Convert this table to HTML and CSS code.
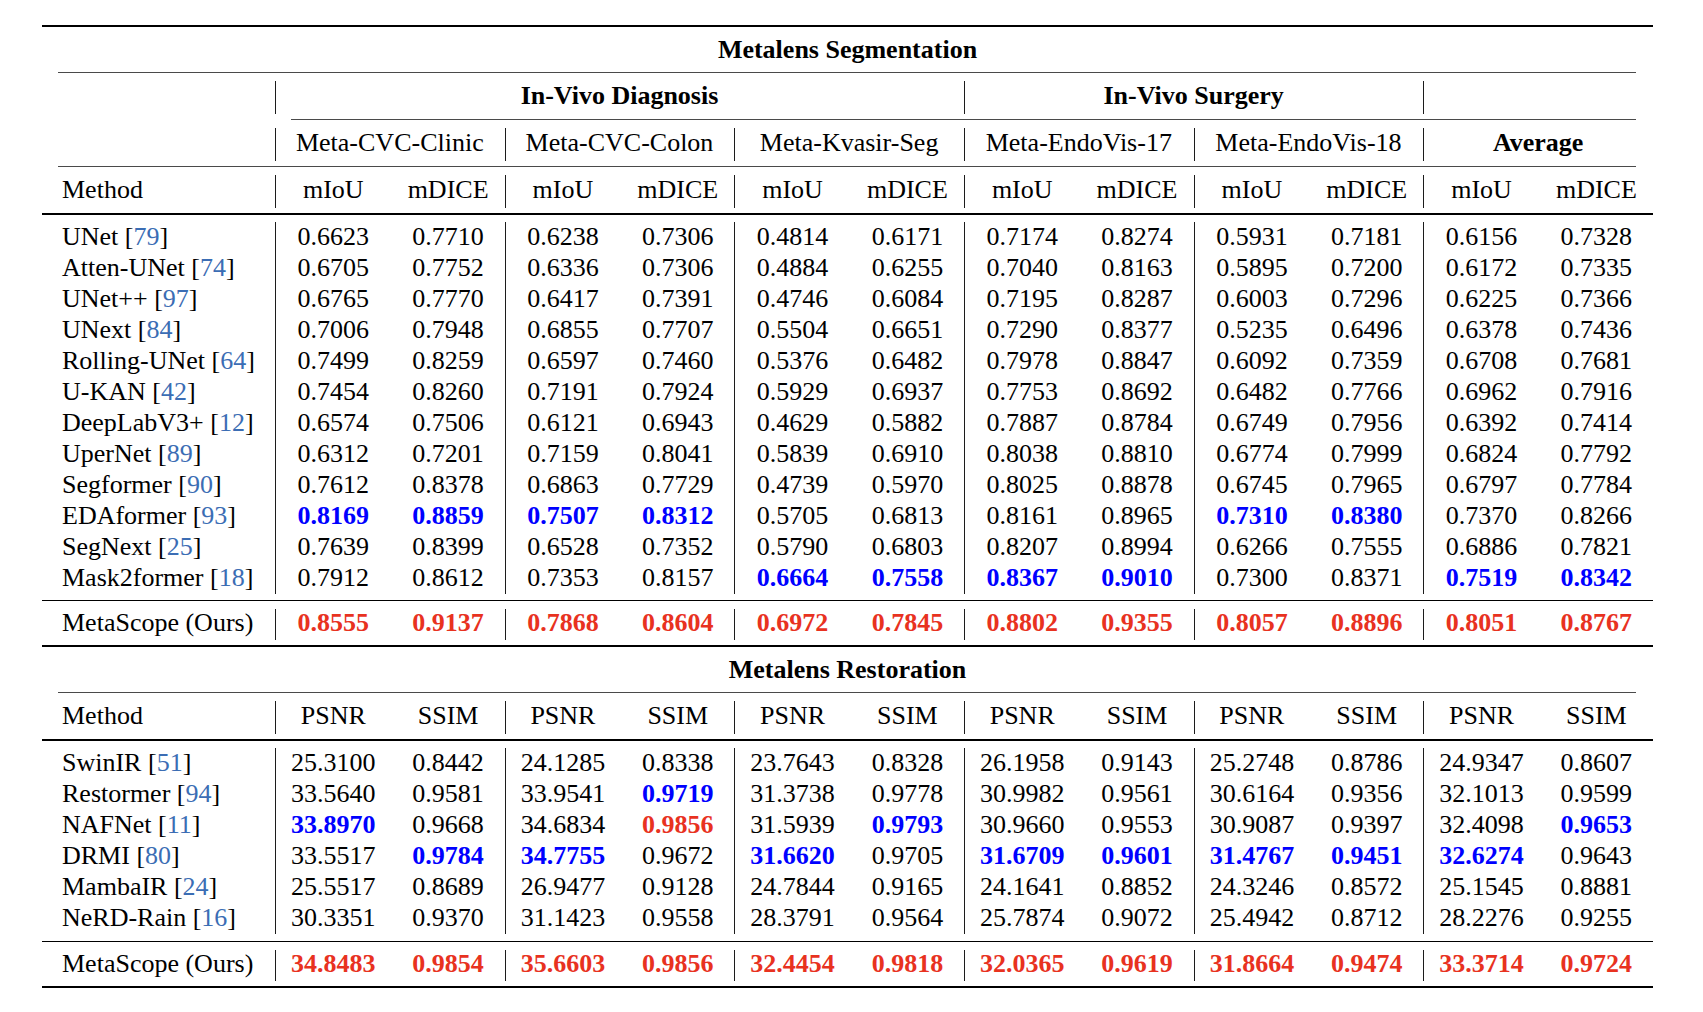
FILE: index.html
```html
<!DOCTYPE html>
<html lang="en">
<head>
<meta charset="utf-8">
<title>Metalens Segmentation and Restoration</title>
<link rel="stylesheet" href="styles.css">
</head>
<body>
<div class="tbl">
  <div class="rule-heavy"></div>
  <div class="title">Metalens Segmentation</div>
  <div class="rule-c"></div>
  <div class="row hdr bold">
    <span class="m"></span>
    <span class="sp6 bar">In-Vivo Diagnosis</span>
    <span class="sp4 bar">In-Vivo Surgery</span>
    <span class="sp2 bar"></span>
  </div>
  <div class="rule-c left-trim"></div>
  <div class="row hdr">
    <span class="m"></span>
    <span class="sp2 bar">Meta-CVC-Clinic</span>
    <span class="sp2 bar">Meta-CVC-Colon</span>
    <span class="sp2 bar">Meta-Kvasir-Seg</span>
    <span class="sp2 bar">Meta-EndoVis-17</span>
    <span class="sp2 bar">Meta-EndoVis-18</span>
    <span class="sp2 bar bold">Average</span>
  </div>
  <div class="rule-c"></div>
  <div class="row hdr pr">
    <span class="m">Method</span>
    <span>mIoU</span><span>mDICE</span>
    <span>mIoU</span><span>mDICE</span>
    <span>mIoU</span><span>mDICE</span>
    <span>mIoU</span><span>mDICE</span>
    <span>mIoU</span><span>mDICE</span>
    <span>mIoU</span><span>mDICE</span>
  </div>
  <div class="rule-light"></div>
  <div class="block">
    <div class="row d pr"><span class="m">UNet [<span class="c">79</span>]</span><span>0.6623</span><span>0.7710</span><span>0.6238</span><span>0.7306</span><span>0.4814</span><span>0.6171</span><span>0.7174</span><span>0.8274</span><span>0.5931</span><span>0.7181</span><span>0.6156</span><span>0.7328</span></div>
    <div class="row d pr"><span class="m">Atten-UNet [<span class="c">74</span>]</span><span>0.6705</span><span>0.7752</span><span>0.6336</span><span>0.7306</span><span>0.4884</span><span>0.6255</span><span>0.7040</span><span>0.8163</span><span>0.5895</span><span>0.7200</span><span>0.6172</span><span>0.7335</span></div>
    <div class="row d pr"><span class="m">UNet++ [<span class="c">97</span>]</span><span>0.6765</span><span>0.7770</span><span>0.6417</span><span>0.7391</span><span>0.4746</span><span>0.6084</span><span>0.7195</span><span>0.8287</span><span>0.6003</span><span>0.7296</span><span>0.6225</span><span>0.7366</span></div>
    <div class="row d pr"><span class="m">UNext [<span class="c">84</span>]</span><span>0.7006</span><span>0.7948</span><span>0.6855</span><span>0.7707</span><span>0.5504</span><span>0.6651</span><span>0.7290</span><span>0.8377</span><span>0.5235</span><span>0.6496</span><span>0.6378</span><span>0.7436</span></div>
    <div class="row d pr"><span class="m">Rolling-UNet [<span class="c">64</span>]</span><span>0.7499</span><span>0.8259</span><span>0.6597</span><span>0.7460</span><span>0.5376</span><span>0.6482</span><span>0.7978</span><span>0.8847</span><span>0.6092</span><span>0.7359</span><span>0.6708</span><span>0.7681</span></div>
    <div class="row d pr"><span class="m">U-KAN [<span class="c">42</span>]</span><span>0.7454</span><span>0.8260</span><span>0.7191</span><span>0.7924</span><span>0.5929</span><span>0.6937</span><span>0.7753</span><span>0.8692</span><span>0.6482</span><span>0.7766</span><span>0.6962</span><span>0.7916</span></div>
    <div class="row d pr"><span class="m">DeepLabV3+ [<span class="c">12</span>]</span><span>0.6574</span><span>0.7506</span><span>0.6121</span><span>0.6943</span><span>0.4629</span><span>0.5882</span><span>0.7887</span><span>0.8784</span><span>0.6749</span><span>0.7956</span><span>0.6392</span><span>0.7414</span></div>
    <div class="row d pr"><span class="m">UperNet [<span class="c">89</span>]</span><span>0.6312</span><span>0.7201</span><span>0.7159</span><span>0.8041</span><span>0.5839</span><span>0.6910</span><span>0.8038</span><span>0.8810</span><span>0.6774</span><span>0.7999</span><span>0.6824</span><span>0.7792</span></div>
    <div class="row d pr"><span class="m">Segformer [<span class="c">90</span>]</span><span>0.7612</span><span>0.8378</span><span>0.6863</span><span>0.7729</span><span>0.4739</span><span>0.5970</span><span>0.8025</span><span>0.8878</span><span>0.6745</span><span>0.7965</span><span>0.6797</span><span>0.7784</span></div>
    <div class="row d pr"><span class="m">EDAformer [<span class="c">93</span>]</span><span class="bb">0.8169</span><span class="bb">0.8859</span><span class="bb">0.7507</span><span class="bb">0.8312</span><span>0.5705</span><span>0.6813</span><span>0.8161</span><span>0.8965</span><span class="bb">0.7310</span><span class="bb">0.8380</span><span>0.7370</span><span>0.8266</span></div>
    <div class="row d pr"><span class="m">SegNext [<span class="c">25</span>]</span><span>0.7639</span><span>0.8399</span><span>0.6528</span><span>0.7352</span><span>0.5790</span><span>0.6803</span><span>0.8207</span><span>0.8994</span><span>0.6266</span><span>0.7555</span><span>0.6886</span><span>0.7821</span></div>
    <div class="row d pr"><span class="m">Mask2former [<span class="c">18</span>]</span><span>0.7912</span><span>0.8612</span><span>0.7353</span><span>0.8157</span><span class="bb">0.6664</span><span class="bb">0.7558</span><span class="bb">0.8367</span><span class="bb">0.9010</span><span>0.7300</span><span>0.8371</span><span class="bb">0.7519</span><span class="bb">0.8342</span></div>
  </div>
  <div class="rule-light"></div>
  <div class="row ours pr"><span class="m">MetaScope (Ours)</span><span class="rb">0.8555</span><span class="rb">0.9137</span><span class="rb">0.7868</span><span class="rb">0.8604</span><span class="rb">0.6972</span><span class="rb">0.7845</span><span class="rb">0.8802</span><span class="rb">0.9355</span><span class="rb">0.8057</span><span class="rb">0.8896</span><span class="rb">0.8051</span><span class="rb">0.8767</span></div>
  <div class="rule-heavy"></div>

  <div class="title">Metalens Restoration</div>
  <div class="rule-c"></div>
  <div class="row hdr pr">
    <span class="m">Method</span>
    <span>PSNR</span><span>SSIM</span>
    <span>PSNR</span><span>SSIM</span>
    <span>PSNR</span><span>SSIM</span>
    <span>PSNR</span><span>SSIM</span>
    <span>PSNR</span><span>SSIM</span>
    <span>PSNR</span><span>SSIM</span>
  </div>
  <div class="rule-light"></div>
  <div class="block block-b">
    <div class="row d pr"><span class="m">SwinIR [<span class="c">51</span>]</span><span>25.3100</span><span>0.8442</span><span>24.1285</span><span>0.8338</span><span>23.7643</span><span>0.8328</span><span>26.1958</span><span>0.9143</span><span>25.2748</span><span>0.8786</span><span>24.9347</span><span>0.8607</span></div>
    <div class="row d pr"><span class="m">Restormer [<span class="c">94</span>]</span><span>33.5640</span><span>0.9581</span><span>33.9541</span><span class="bb">0.9719</span><span>31.3738</span><span>0.9778</span><span>30.9982</span><span>0.9561</span><span>30.6164</span><span>0.9356</span><span>32.1013</span><span>0.9599</span></div>
    <div class="row d pr"><span class="m">NAFNet [<span class="c">11</span>]</span><span class="bb">33.8970</span><span>0.9668</span><span>34.6834</span><span class="rb">0.9856</span><span>31.5939</span><span class="bb">0.9793</span><span>30.9660</span><span>0.9553</span><span>30.9087</span><span>0.9397</span><span>32.4098</span><span class="bb">0.9653</span></div>
    <div class="row d pr"><span class="m">DRMI [<span class="c">80</span>]</span><span>33.5517</span><span class="bb">0.9784</span><span class="bb">34.7755</span><span>0.9672</span><span class="bb">31.6620</span><span>0.9705</span><span class="bb">31.6709</span><span class="bb">0.9601</span><span class="bb">31.4767</span><span class="bb">0.9451</span><span class="bb">32.6274</span><span>0.9643</span></div>
    <div class="row d pr"><span class="m">MambaIR [<span class="c">24</span>]</span><span>25.5517</span><span>0.8689</span><span>26.9477</span><span>0.9128</span><span>24.7844</span><span>0.9165</span><span>24.1641</span><span>0.8852</span><span>24.3246</span><span>0.8572</span><span>25.1545</span><span>0.8881</span></div>
    <div class="row d pr"><span class="m">NeRD-Rain [<span class="c">16</span>]</span><span>30.3351</span><span>0.9370</span><span>31.1423</span><span>0.9558</span><span>28.3791</span><span>0.9564</span><span>25.7874</span><span>0.9072</span><span>25.4942</span><span>0.8712</span><span>28.2276</span><span>0.9255</span></div>
  </div>
  <div class="rule-light"></div>
  <div class="row ours pr"><span class="m">MetaScope (Ours)</span><span class="rb">34.8483</span><span class="rb">0.9854</span><span class="rb">35.6603</span><span class="rb">0.9856</span><span class="rb">32.4454</span><span class="rb">0.9818</span><span class="rb">32.0365</span><span class="rb">0.9619</span><span class="rb">31.8664</span><span class="rb">0.9474</span><span class="rb">33.3714</span><span class="rb">0.9724</span></div>
  <div class="rule-heavy"></div>
</div>
</body>
</html>
```

FILE: styles.css
```css
* {
  box-sizing: border-box;
  margin: 0;
  padding: 0;
}

html,
body {
  background: #ffffff;
}

body {
  font-family: "Liberation Serif", "Times New Roman", serif;
  font-size: 26px;
  color: #000000;
}

.tbl {
  width: 1611px;
  margin: 25px 0 0 42px;
}

.rule-heavy {
  height: 2px;
  background: #000000;
}

.rule-light {
  height: 1.5px;
  background: #000000;
}

.rule-c {
  height: 1px;
  background: #4a4a4a;
  margin: 0 17px 0 16px;
}

.rule-c.left-trim {
  margin-left: 249px;
}

.title {
  height: 45px;
  display: flex;
  align-items: center;
  justify-content: center;
  font-weight: bold;
}

.row {
  display: grid;
  grid-template-columns: 233px repeat(6, 116.5px 113.17px);
}

.row > span {
  display: flex;
  align-items: center;
  justify-content: center;
  white-space: nowrap;
}

.row > .m {
  justify-content: flex-start;
  padding-left: 20px;
}

.hdr {
  height: 46px;
}

.ours {
  height: 44px;
}

.d {
  height: 31px;
}

.block {
  padding: 7px 0 6px;
}

.block.block-b {
  padding: 7px 0 7px;
}

.bold {
  font-weight: bold;
}

.sp2 {
  grid-column: span 2;
}

.sp4 {
  grid-column: span 4;
}

.sp6 {
  grid-column: span 6;
}

.hdr .bar,
.hdr.pr > span:nth-child(2n),
.ours.pr > span:nth-child(2n) {
  background-image: linear-gradient(#1c1c1c, #1c1c1c);
  background-repeat: no-repeat;
  background-position: 0 8px;
  background-size: 1.3px calc(100% - 13px);
}

.d.pr > span:nth-child(2n) {
  background-image: linear-gradient(#1c1c1c, #1c1c1c);
  background-repeat: no-repeat;
  background-position: 0 0;
  background-size: 1.3px 100%;
}

.c {
  color: #3b6db4;
}

.bb {
  color: #0000ff;
  font-weight: bold;
}

.rb {
  color: #e8321f;
  font-weight: bold;
}
```
